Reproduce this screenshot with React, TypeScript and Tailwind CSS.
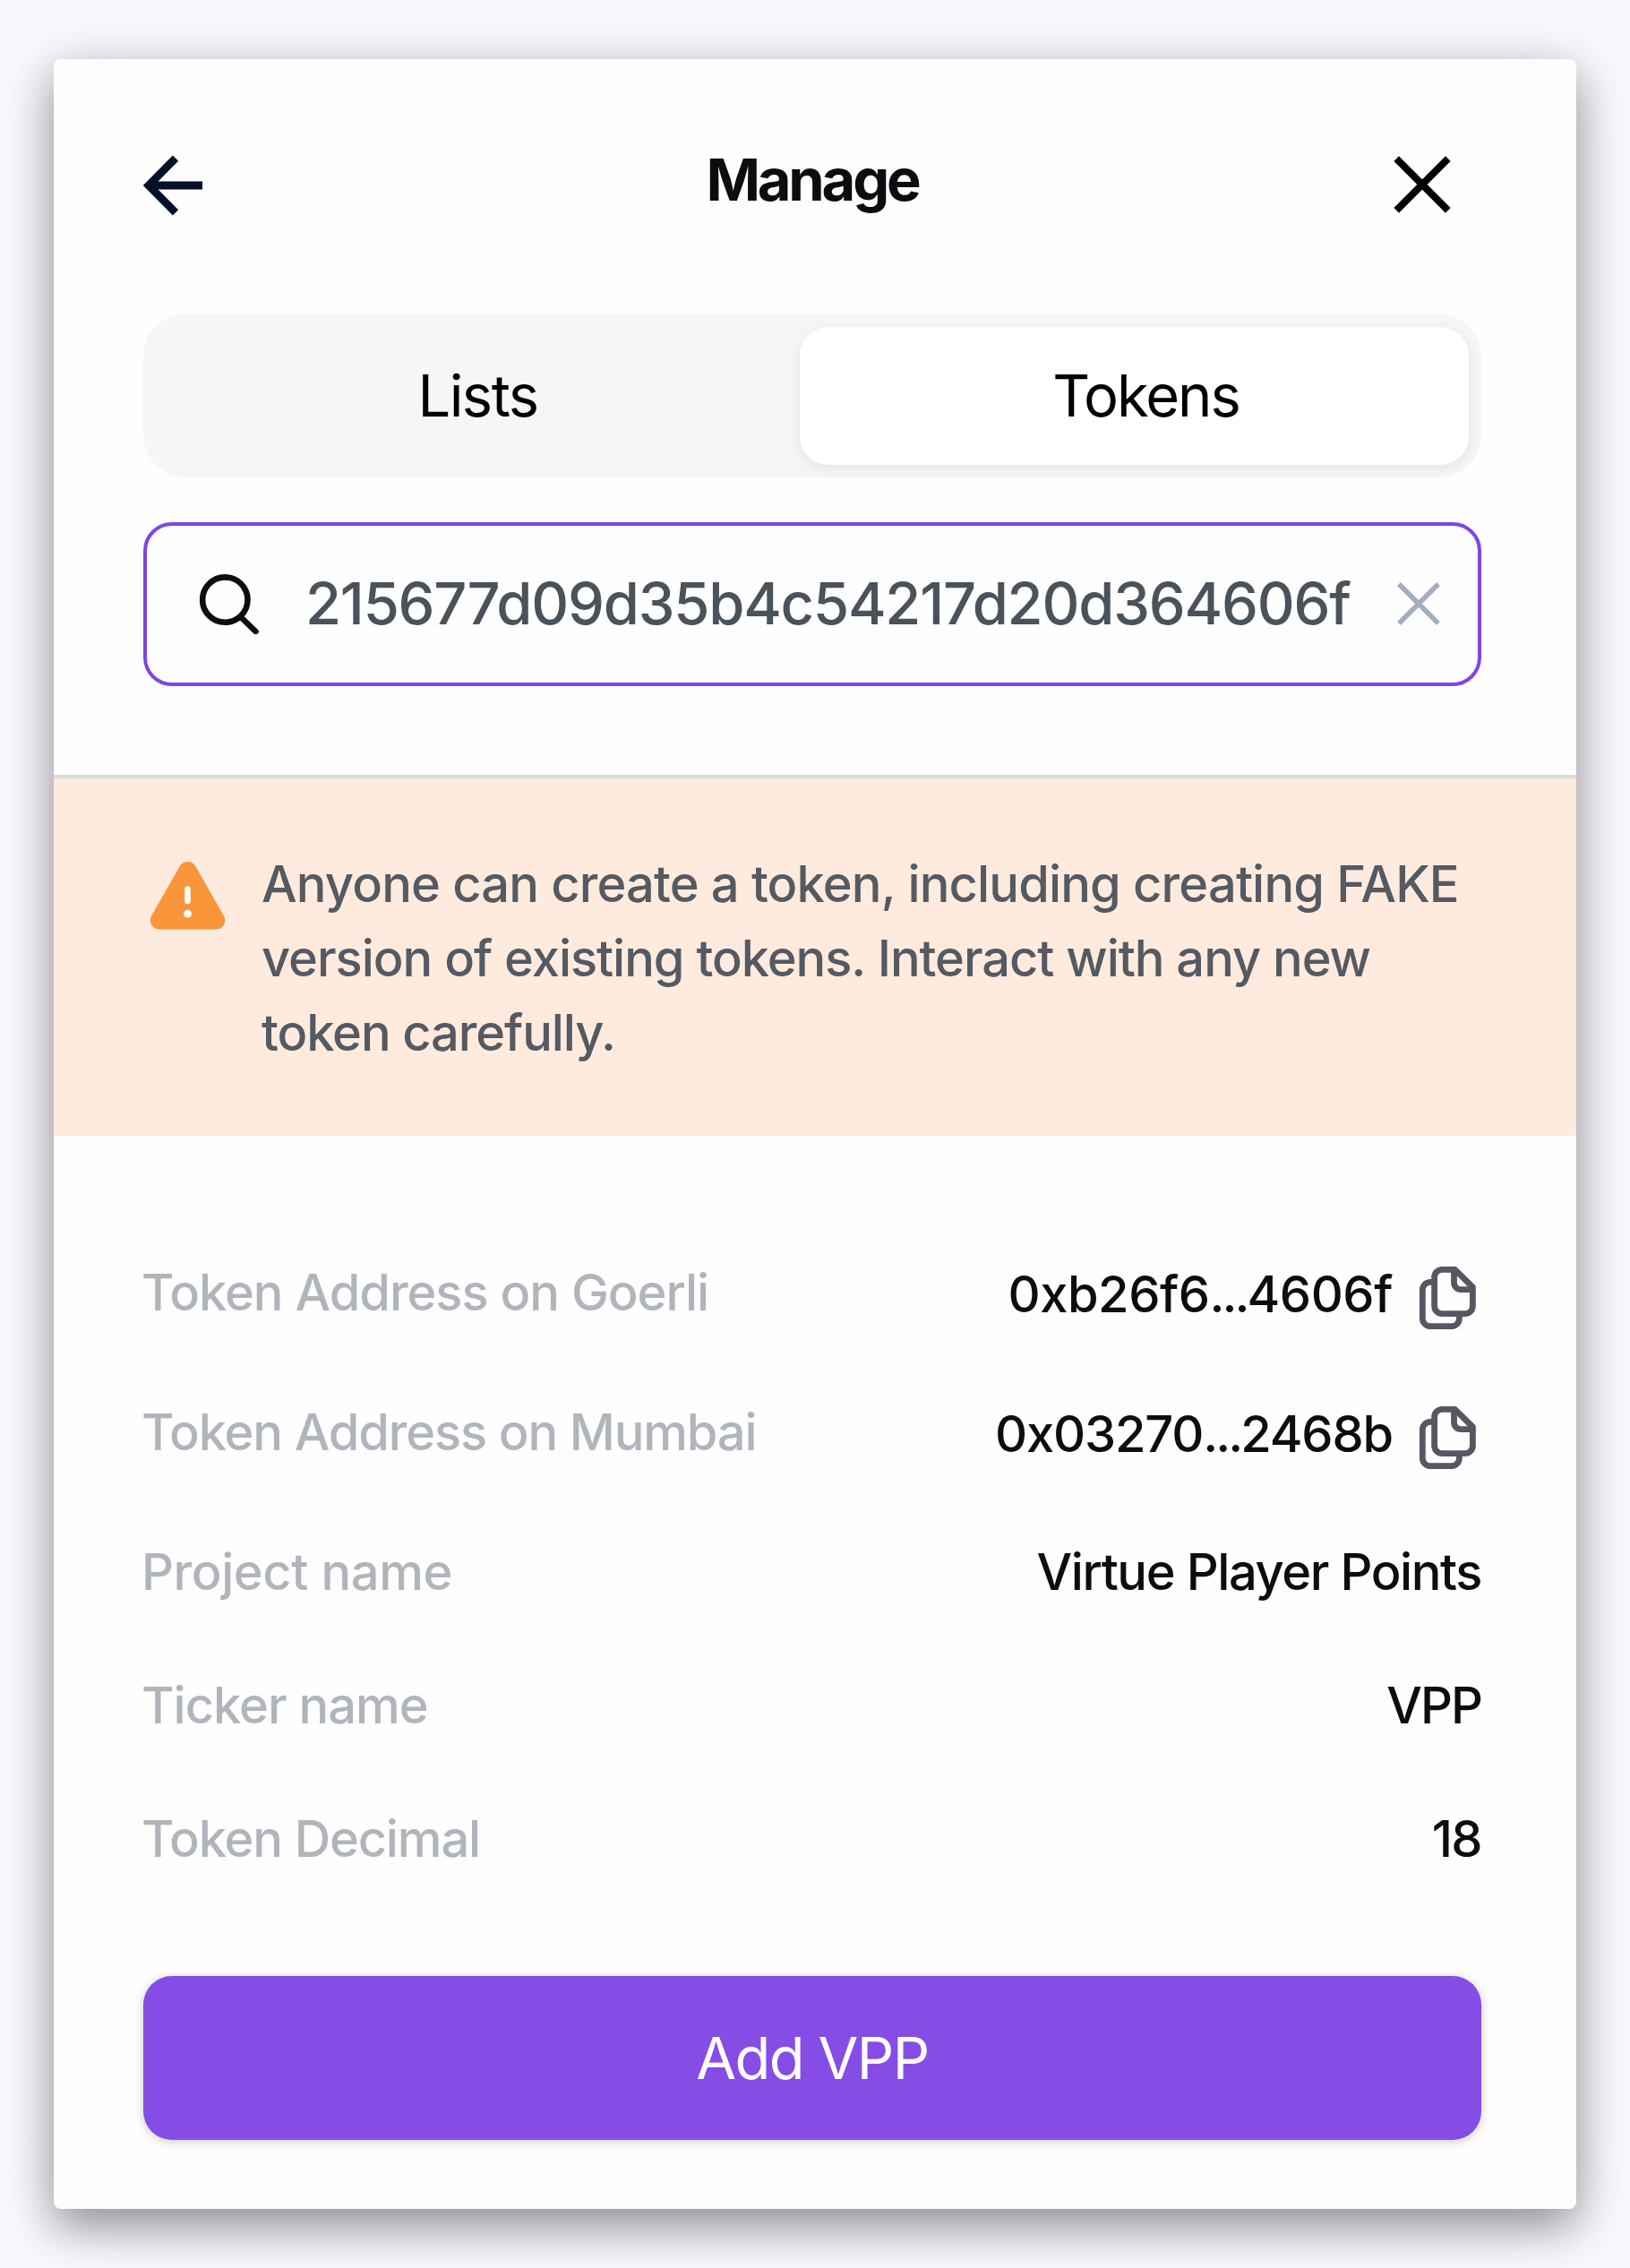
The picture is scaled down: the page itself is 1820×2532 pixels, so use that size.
import type { ReactNode } from "react";

function CopyIcon() {
  return (
    <svg className="mt-[13px] mr-[6px] ml-[30px] h-[70px] w-[63px] shrink-0" viewBox="0 0 63 70" fill="none" stroke="#555862" strokeWidth="6.8" strokeLinejoin="round">
      <path d="M16.6 17.3H12a8.7 8.7 0 0 0-8.7 8.7v32a8.7 8.7 0 0 0 8.7 8.7h23.7a8.7 8.7 0 0 0 8.7-8.7v-5.3" />
      <path d="M25 3.3h14.5L59.4 23v21a8.7 8.7 0 0 1-8.7 8.7H25.3a8.7 8.7 0 0 1-8.7-8.7V12A8.7 8.7 0 0 1 25 3.3Z" />
      <path d="M38.5 3.8V18a7.6 7.6 0 0 0 7.6 7.6h13" />
    </svg>
  );
}

function Row({ label, labelClass, children }: { label: string; labelClass: string; children: ReactNode }) {
  return (
    <div className="flex items-start justify-between text-[56px] leading-[84px] font-medium whitespace-nowrap">
      <span className={"-ml-[2px] text-[#b0b5bc] " + labelClass}>{label}</span>
      {children}
    </div>
  );
}

export default function App() {
  return (
    <div className="h-[2532px] w-[1820px] overflow-hidden bg-[#faf7ff] px-[60px] pt-[66px] font-['Inter',sans-serif] text-[#0b0d10]">
      <div className="h-[2400px] rounded-[8px] bg-[#fefefe] pt-[94px] shadow-[0_20px_50px_rgba(0,0,0,0.38),0_8px_80px_rgba(0,0,0,0.09)]">
        <div className="pr-[106px] pl-[100px]">
          <header className="grid h-[80px] grid-cols-[1fr_auto_1fr] items-center">
            <svg className="mt-[13px] h-[68px] w-[66px]" viewBox="0 0 66 68" fill="none" stroke="#04102a" strokeWidth="8.8">
              <path d="M36 3.7 6 34l30 30.3M6 34h60" />
            </svg>
            <h1 className="text-[65px] leading-[80px] font-bold tracking-[-3.2px]">Manage</h1>
            <svg className="mt-[10px] mr-[34px] h-[64px] w-[64px] justify-self-end" viewBox="0 0 64 64" fill="none" stroke="#000" strokeWidth="8">
              <path d="m3.2 3.2 57.6 57.6M60.8 3.2 3.2 60.8" />
            </svg>
          </header>

          <div className="mt-[110px] flex h-[183px] rounded-[48px] bg-[#f6f6f6] py-[15px] pr-[14px] pl-[14px] text-[65px] leading-[80px] text-black">
            <button className="flex-1 tracking-[-1.5px]">Lists</button>
            <button className="h-[154px] w-[747px] rounded-[32px] bg-white pl-[26px] tracking-[-2px] shadow-[0_4px_16px_rgba(0,0,0,0.08)]">Tokens</button>
          </div>

          <div className="mt-[50px] flex h-[183px] items-center rounded-[32px] border-4 border-[#7f45e6] pr-[42px] pl-[59px]">
            <svg className="h-[67px] w-[66px] shrink-0" viewBox="0 0 66 67" fill="none" stroke="#0b0d10" strokeWidth="6.6">
              <circle cx="28.3" cy="28.6" r="25.2" />
              <path d="m46 48 16.5 16" strokeLinecap="round" />
            </svg>
            <span className="-mt-[2px] ml-[52px] flex-1 text-[65px] leading-[80px] font-medium tracking-[-1.2px] whitespace-nowrap text-[#4a525b]">215677d09d35b4c54217d20d364606f</span>
            <svg className="-mt-[2px] h-[48px] w-[48px] shrink-0" viewBox="0 0 48 48" fill="none" stroke="#a3adc0" strokeWidth="5.4">
              <path d="m2 2 44 44M46 2 2 46" />
            </svg>
          </div>
        </div>

        <div className="mt-[99px] flex h-[403px] items-start border-t-4 border-[#dcdddd] bg-[#feebde] pt-[75px] pl-[107px]">
          <svg className="mt-[18px] h-[76px] w-[85px] shrink-0" viewBox="0 0 85 77">
            <path d="M33.5 5.2c4-7 14-7 18 0l31.8 55.8c4 7-.8 15.5-9 15.5h-63.6c-8.2 0-13-8.500-9-15.500Z" fill="#f9953a" />
            <path d="M42.5 31v13.5" stroke="#fff" strokeWidth="6.6" strokeLinecap="round" />
            <circle cx="42.5" cy="59" r="4.5" fill="#fff" />
          </svg>
          <p className="mt-[2px] ml-[40px] text-[56px] leading-[83px] font-medium whitespace-nowrap text-[#555a62]">
            <span className="block tracking-[-0.83px]">Anyone can create a token, including creating FAKE</span>
            <span className="block tracking-[-1.03px]">version of existing tokens. Interact with any new</span>
            <span className="block tracking-[-1.1px]">token carefully.</span>
          </p>
        </div>

        <div className="mt-[133px] pr-[106px] pl-[100px]">
          <div className="flex flex-col gap-[66px]">
            <Row label="Token Address on Goerli" labelClass="pb-[6px] tracking-[-1.02px]">
              <span className="flex items-start">
                <span className="mt-[2px] tracking-[-0.45px]">0xb26f6<span className="tracking-[-3px]">...</span>4606f</span>
                <CopyIcon />
              </span>
            </Row>
            <Row label="Token Address on Mumbai" labelClass="pb-[6px] tracking-[-1.15px]">
              <span className="flex items-start">
                <span className="mt-[2px] tracking-[-1.15px]">0x03270<span className="tracking-[-3px]">...</span>2468b</span>
                <CopyIcon />
              </span>
            </Row>
            <Row label="Project name" labelClass="tracking-[-0.4px]">
              <span className="tracking-[-1.4px]">Virtue Player Points</span>
            </Row>
            <Row label="Ticker name" labelClass="-mt-[1px] tracking-[-1px]">
              <span className="-mt-[1px] tracking-[-1.9px]">VPP</span>
            </Row>
            <Row label="Token Decimal" labelClass="-mt-[1px] tracking-[-1.15px]">
              <span className="-mt-[1px] tracking-[-1.6px]">18</span>
            </Row>
          </div>
          <button className="mt-[111px] h-[183px] w-full rounded-[32px] bg-[#854ce6] text-[65px] leading-[80px] tracking-[-1.6px] text-white shadow-[0_2px_12px_rgba(0,0,0,0.2)]">Add VPP</button>
        </div>
      </div>
    </div>
  );
}
